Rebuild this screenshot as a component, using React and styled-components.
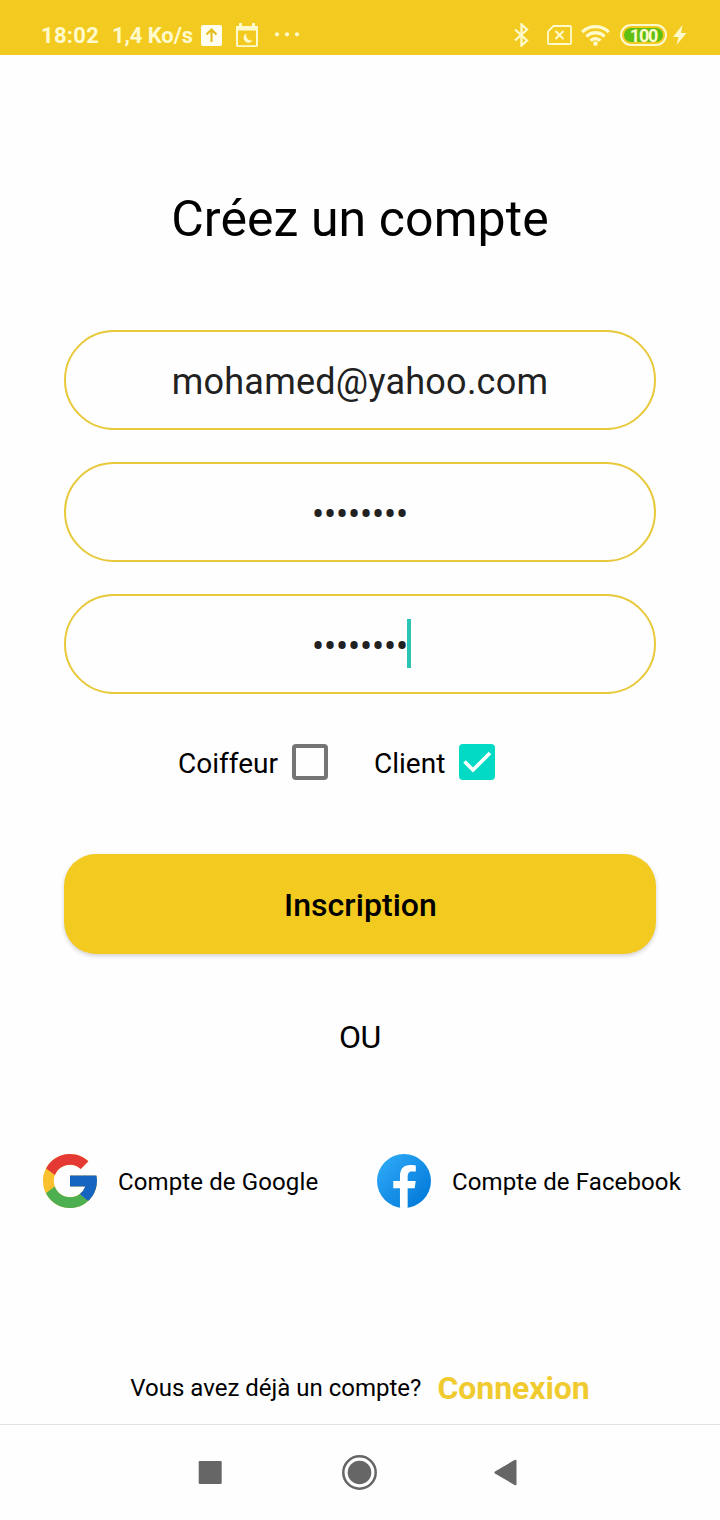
import React from 'react';
import styled, { createGlobalStyle } from 'styled-components';

const GlobalStyle = createGlobalStyle`
  * { box-sizing: border-box; }
  body { margin: 0; background: #fefefe; font-family: Roboto, sans-serif; color: #000; }
  svg { display: block; flex: none; }
`;

const Screen = styled.div`
  width: 720px;
  height: 1520px;
  display: flex;
  flex-direction: column;
  background: #fefefe;
  overflow: hidden;
`;

const StatusBar = styled.header`
  height: 55px;
  flex: none;
  display: flex;
  justify-content: space-between;
  padding: 15px 33px 0 41px;
  background: #f3ca20;
  color: #fffacb;
`;

const StatusGroup = styled.div`
  display: flex;
  align-items: center;
  height: 40px;
`;

const StatusText = styled.span`
  width: ${(p) => p.$width}px;
  padding-top: 2px;
  font-size: 22px;
  font-weight: 700;
  letter-spacing: ${(p) => p.$tracking || 0}px;
  line-height: 40px;
  white-space: nowrap;
`;

const StatusIcon = styled.svg`
  margin-left: ${(p) => p.$gap || 0}px;
`;

const Content = styled.main`
  flex: 1;
  display: flex;
  flex-direction: column;
  align-items: center;
`;

const Title = styled.h1`
  margin: 134px 0 0;
  height: 60px;
  font-size: 50px;
  font-weight: 400;
  line-height: 60px;
  letter-spacing: 0.08px;
  white-space: nowrap;
`;

const Fields = styled.div`
  margin-top: 81px;
  display: flex;
  flex-direction: column;
  gap: 32px;
`;

const Field = styled.div`
  width: 592px;
  height: 100px;
  display: flex;
  align-items: center;
  justify-content: center;
  padding-top: ${(p) => (p.$secret ? 5 : 4)}px;
  border: 2px solid #e8c93b;
  border-radius: 50px;
  font-size: 36px;
  letter-spacing: ${(p) => (p.$secret ? -0.15 : 0.24)}px;
  color: #212121;
`;

const Caret = styled.span`
  width: 4px;
  height: 49px;
  margin: 0 -3px 7px -1px;
  background: #2bc4b4;
`;

const Roles = styled.div`
  margin: 50px 47px 0 0;
  height: 36px;
  display: flex;
  align-items: center;
  gap: 46px;
`;

const Role = styled.label`
  display: flex;
  align-items: center;
  gap: 14px;
  font-size: 28px;
  line-height: 36px;
  white-space: nowrap;
`;

const RoleName = styled.span`
  width: ${(p) => p.$width}px;
  padding-top: 3px;
`;

const Box = styled.span`
  width: 36px;
  height: 36px;
  border-radius: 4px;
  border: ${(p) => (p.$checked ? '0' : '4px solid #757575')};
  background: ${(p) => (p.$checked ? '#03dac5' : 'transparent')};
`;

const SubmitButton = styled.button`
  margin-top: 74px;
  width: 592px;
  height: 100px;
  padding: 2px 0 0 1px;
  border: 0;
  border-radius: 32px;
  background: #f3ca20;
  box-shadow: 0 2px 4px rgba(0, 0, 0, 0.18);
  font-family: inherit;
  font-size: 32px;
  font-weight: 500;
  letter-spacing: 0.05px;
  color: #000;
`;

const Separator = styled.p`
  margin: 63px 0 0;
  height: 40px;
  font-size: 32px;
  line-height: 40px;
  letter-spacing: -0.3px;
`;

const Socials = styled.div`
  margin-top: 97px;
  width: 720px;
  height: 54px;
  display: flex;
  padding-left: 43px;
`;

const Social = styled.div`
  width: 334px;
  flex: none;
  display: flex;
  align-items: center;
  gap: 21px;
`;

const SocialName = styled.span`
  padding-top: 2px;
  font-size: 24px;
  letter-spacing: 0.12px;
  white-space: nowrap;
`;

const Login = styled.div`
  margin-top: 160px;
  height: 40px;
  display: flex;
  align-items: flex-start;
  line-height: 40px;
  gap: 16px;
  white-space: nowrap;
`;

const LoginHint = styled.span`
  font-size: 24px;
`;

const LoginLink = styled.a`
  font-size: 32px;
  font-weight: 700;
  letter-spacing: -0.08px;
  color: #f0cb30;
`;

const NavBar = styled.nav`
  height: 96px;
  flex: none;
  display: flex;
  align-items: center;
  padding-left: 198px;
  border-top: 1px solid #e2e2e2;
`;

const NavIcon = styled.svg`
  margin-left: ${(p) => p.$gap || 0}px;
  fill: #666;
`;

const GoogleLogo = () => (
  <svg width="54" height="54" viewBox="4 4 40 40">
    <path fill="#fbc02d" d="M43.611 20.083H42V20H24v8h11.303C33.654 32.657 29.223 36 24 36c-6.627 0-12-5.373-12-12s5.373-12 12-12c3.059 0 5.842 1.154 7.961 3.039l5.657-5.657C34.046 6.053 29.268 4 24 4 12.955 4 4 12.955 4 24s8.955 20 20 20 20-8.955 20-20c0-1.341-.138-2.65-.389-3.917z" />
    <path fill="#e53935" d="m6.306 14.691 6.571 4.819C14.655 15.108 18.961 12 24 12c3.059 0 5.842 1.154 7.961 3.039l5.657-5.657C34.046 6.053 29.268 4 24 4 16.318 4 9.656 8.337 6.306 14.691z" />
    <path fill="#4caf50" d="M24 44c5.166 0 9.86-1.977 13.409-5.192l-6.19-5.238C29.211 35.091 26.715 36 24 36c-5.202 0-9.619-3.317-11.283-7.946l-6.522 5.025C9.505 39.556 16.227 44 24 44z" />
    <path fill="#1565c0" d="M43.611 20.083 43.595 20H24v8h11.303a12.04 12.04 0 0 1-4.087 5.571l6.193 5.237C36.971 39.205 44 34 44 24c0-1.341-.138-2.65-.389-3.917z" />
  </svg>
);

const FacebookLogo = () => (
  <svg width="54" height="54" viewBox="4 4 40 40">
    <defs>
      <linearGradient id="fb" x1="9.993" x2="40.615" y1="9.993" y2="40.615" gradientUnits="userSpaceOnUse">
        <stop offset="0" stopColor="#2aa4f4" />
        <stop offset="1" stopColor="#007ad9" />
      </linearGradient>
    </defs>
    <circle cx="24" cy="24" r="20" fill="url(#fb)" />
    <path fill="#fff" d="M26.707 29.301h5.176l.813-5.258h-5.989v-2.874c0-2.184.714-4.121 2.757-4.121h3.283V12.46c-.577-.078-1.797-.248-4.102-.248-4.814 0-7.635 2.542-7.635 8.334v3.498H16.06v5.258h4.948v14.452C21.988 43.9 22.981 44 24 44c.921 0 1.82-.084 2.707-.204V29.301z" />
  </svg>
);

const BatteryBadge = styled.span`
  width: 47px;
  height: 22px;
  margin-left: 10px;
  display: flex;
  align-items: center;
  justify-content: center;
  border: 2px solid #fffacb;
  border-radius: 11px;
  padding: 2px;
`;

const BatteryLevel = styled.span`
  width: 39px;
  height: 14px;
  border-radius: 7px;
  background: #5fbf12;
  color: #fffacb;
  font-size: 18px;
  font-weight: 700;
  letter-spacing: -1.2px;
  line-height: 15px;
  text-align: center;
`;

export default function App() {
  return (
    <Screen>
      <GlobalStyle />
      <StatusBar>
        <StatusGroup>
          <StatusText $width={71} $tracking={0.3}>18:02</StatusText>
          <StatusText $width={89} $tracking={-0.1}>1,4 Ko/s</StatusText>
          <StatusIcon width="21" height="21" viewBox="0 0 21 21">
            <rect width="21" height="21" rx="2" fill="#fffef0" />
            <path d="M10.5 17V5M5.5 9.5l5-5 5 5" fill="none" stroke="#e4bd20" strokeWidth="2.2" />
          </StatusIcon>
          <StatusIcon $gap={14} width="22" height="24" viewBox="0 0 22 24">
            <path d="M1 4h20v18a1.2 1.2 0 0 1-1.2 1.2H2.2A1.2 1.2 0 0 1 1 22z" fill="none" stroke="#fffacb" strokeWidth="2" />
            <path d="M0 3h22v4.500H0zM3 0h3v4H3zM16 0h3v4h-3z" fill="#fffacb" />
            <path d="M10.500 10.500a4.800 4.800 0 1 0 6 6.800 5 5 0 0 1-6-6.800z" fill="#fffacb" />
          </StatusIcon>
          <StatusIcon $gap={16} width="26" height="6" viewBox="0 0 26 6" fill="#fffacb">
            <circle cx="3" cy="2.300" r="2.100" />
            <circle cx="13" cy="2.300" r="2.100" />
            <circle cx="23" cy="2.300" r="2.100" />
          </StatusIcon>
        </StatusGroup>
        <StatusGroup>
          <StatusIcon width="15" height="24" viewBox="0 0 15 24">
            <path d="m1 6.500 12 11-5.500 5V1.500l5.500 5-12 11" fill="none" stroke="#fffacb" strokeWidth="2.300" />
          </StatusIcon>
          <StatusIcon $gap={18} width="25" height="20" viewBox="0 0 25 20" fill="none" stroke="#fffacb">
            <path d="M6.500 1H23a1 1 0 0 1 1 1v16a1 1 0 0 1-1 1H2a1 1 0 0 1-1-1V6.500z" strokeWidth="1.800" />
            <path d="m8.500 6 8 8M16.500 6l-8 8" strokeWidth="2" />
          </StatusIcon>
          <StatusIcon $gap={9} width="29" height="22" viewBox="0 0 29 22">
            <g fill="none" stroke="#fffacb" strokeWidth="3.300">
              <path d="M1.200 8.200a18.800 18.800 0 0 1 26.600 0" />
              <path d="M5.400 12.500a12.900 12.900 0 0 1 18.200 0" />
              <path d="M9.600 16.700a6.900 6.900 0 0 1 9.800 0" />
            </g>
            <circle cx="14.500" cy="19.600" r="2.300" fill="#fffacb" />
          </StatusIcon>
          <BatteryBadge>
            <BatteryLevel>100</BatteryLevel>
          </BatteryBadge>
          <StatusIcon $gap={6} width="14" height="20" viewBox="0 0 14 20">
            <path d="M9.500 0 0 12h5.500L3.500 20 13.500 8H8z" fill="#fffacb" />
          </StatusIcon>
        </StatusGroup>
      </StatusBar>

      <Content>
        <Title>Créez un compte</Title>
        <Fields>
          <Field>mohamed@yahoo.com</Field>
          <Field $secret>••••••••</Field>
          <Field $secret>
            ••••••••
            <Caret />
          </Field>
        </Fields>
        <Roles>
          <Role>
            <RoleName $width={100}>Coiffeur</RoleName>
            <Box />
          </Role>
          <Role>
            <RoleName $width={71}>Client</RoleName>
            <Box $checked>
              <svg width="36" height="36" viewBox="0 0 36 36">
                <path d="m5.500 17.500 8.500 8.500L31 9" fill="none" stroke="#fff" strokeWidth="3.600" />
              </svg>
            </Box>
          </Role>
        </Roles>
        <SubmitButton>Inscription</SubmitButton>
        <Separator>OU</Separator>
        <Socials>
          <Social>
            <GoogleLogo />
            <SocialName>Compte de Google</SocialName>
          </Social>
          <Social>
            <FacebookLogo />
            <SocialName>Compte de Facebook</SocialName>
          </Social>
        </Socials>
        <Login>
          <LoginHint>Vous avez déjà un compte?</LoginHint>
          <LoginLink>Connexion</LoginLink>
        </Login>
      </Content>

      <NavBar>
        <NavIcon width="24" height="24" viewBox="0 0 24 24">
          <rect x="0.700" y="0" width="23" height="23" rx="1.200" />
        </NavIcon>
        <NavIcon $gap={120} width="35" height="35" viewBox="0 0 35 35">
          <circle cx="17.500" cy="17.500" r="16.200" fill="none" stroke="#666" strokeWidth="2.500" />
          <circle cx="17.500" cy="17.500" r="11.800" />
        </NavIcon>
        <NavIcon $gap={117} width="23" height="27" viewBox="0 0 23 27">
          <path d="M1 12.500 20.500 1q2-1 2 1v23q0 2-2 1L1 14.500q-1.200-1 0-2z" />
        </NavIcon>
      </NavBar>
    </Screen>
  );
}
